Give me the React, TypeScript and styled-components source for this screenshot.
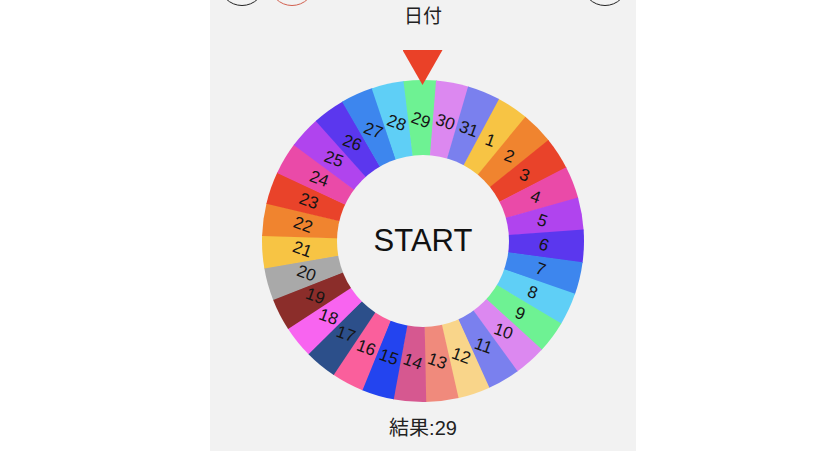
import styled, { createGlobalStyle } from "styled-components"

const GlobalStyle = createGlobalStyle`
  html, body {
    margin: 0;
    padding: 0;
    background: #ffffff;
  }
  body {
    font-family: "Liberation Sans", "Noto Sans CJK JP", sans-serif;
  }
`

const Panel = styled.main`
  width: 426px;
  min-height: 100vh;
  margin-left: 210px;
  background: #f2f2f2;
  overflow: hidden;
`

const Header = styled.header`
  display: grid;
  grid-template-columns: 1fr auto 1fr;
  height: 28px;
`

const ButtonGroup = styled.div<{ $side: "left" | "right" }>`
  display: flex;
  gap: 4px;
  justify-content: ${(p) => (p.$side === "left" ? "flex-start" : "flex-end")};
  padding: ${(p) => (p.$side === "left" ? "0 0 0 9px" : "0 8px 0 0")};
`

const RoundButton = styled.button<{ $tone?: string }>`
  width: 46px;
  height: 46px;
  margin-top: -40px;
  border-radius: 50%;
  border: 1px solid ${(p) => p.$tone ?? "#222"};
  background: transparent;
  padding: 0;
`

const Title = styled.h1`
  margin: 0;
  padding-top: 4px;
  font-family: "Noto Sans CJK JP", sans-serif;
  font-size: 19px;
  line-height: 22px;
  font-weight: 400;
  color: #222;
`

const WheelStack = styled.div`
  display: grid;
  width: 322px;
  height: 322px;
  margin: 52px auto 0;
  & > * {
    grid-area: 1 / 1;
  }
`

const Pointer = styled.div`
  justify-self: center;
  align-self: start;
  width: 40px;
  height: 35px;
  margin-top: -30px;
  margin-left: -1px;
  background: #ea4128;
  clip-path: polygon(0 0, 100% 0, 50% 100%);
  z-index: 2;
`

const StartButton = styled.button`
  justify-self: center;
  align-self: center;
  border: none;
  background: transparent;
  font-family: "Liberation Sans", sans-serif;
  font-size: 31px;
  font-weight: 400;
  color: #111;
  padding: 0;
  z-index: 1;
`

const Result = styled.p`
  margin: 14px 0 0;
  text-align: center;
  font-family: "Liberation Sans", "Noto Sans CJK JP", sans-serif;
  font-size: 20px;
  line-height: 24px;
  color: #222;
`

const palette = [
  "#f7c444", "#f0842f", "#e9432a", "#ea4aa8", "#b044ee",
  "#5b37ee", "#3d86ee", "#5fcff6", "#6ef293", "#dc88f0",
  "#7a80ee", "#f9d58a", "#f08a7c", "#d65890", "#2344ef",
  "#fa5f9c", "#2c4f8a", "#f864f0", "#8b2d2a", "#a9a9a9",
]

const DAYS = 31
const R = 161
const INNER = 86
const LABEL_R = 121
const SELECTED = 29
const OFFSET = -1

function polar(r: number, deg: number) {
  const a = (deg * Math.PI) / 180
  return [r * Math.sin(a), -r * Math.cos(a)]
}

function Wheel() {
  const step = 360 / DAYS
  const days = Array.from({ length: DAYS }, (_, i) => i + 1)
  return (
    <svg width={322} height={322} viewBox={`${-R} ${-R} ${R * 2} ${R * 2}`}>
      {days.map((d) => {
        const mid = (d - SELECTED) * step + OFFSET
        const [x1, y1] = polar(R, mid - step / 2 - 0.15)
        const [x2, y2] = polar(R, mid + step / 2 + 0.15)
        const color = palette[(d - 1) % palette.length]
        return (
          <path
            key={d}
            d={`M0 0 L${x1} ${y1} A${R} ${R} 0 0 1 ${x2} ${y2} Z`}
            fill={color}
          />
        )
      })}
      <circle r={INNER} fill="#f2f2f2" />
      {days.map((d) => {
        const mid = (d - SELECTED) * step + OFFSET
        const [x, y] = polar(LABEL_R, mid)
        return (
          <text
            key={d}
            x={x}
            y={y}
            transform={`rotate(20 ${x} ${y})`}
            textAnchor="middle"
            dominantBaseline="central"
            fontFamily="Liberation Sans, sans-serif"
            fontSize={17}
            fill="#151515"
          >
            {d}
          </text>
        )
      })}
    </svg>
  )
}

export default function App() {
  return (
    <>
      <GlobalStyle />
      <Panel>
        <Header>
          <ButtonGroup $side="left">
            <RoundButton aria-label="menu" />
            <RoundButton aria-label="reset" $tone="#d2604f" />
          </ButtonGroup>
          <Title>日付</Title>
          <ButtonGroup $side="right">
            <RoundButton aria-label="settings" />
          </ButtonGroup>
        </Header>
        <WheelStack>
          <Wheel />
          <Pointer />
          <StartButton>START</StartButton>
        </WheelStack>
        <Result>結果:{SELECTED}</Result>
      </Panel>
    </>
  )
}
